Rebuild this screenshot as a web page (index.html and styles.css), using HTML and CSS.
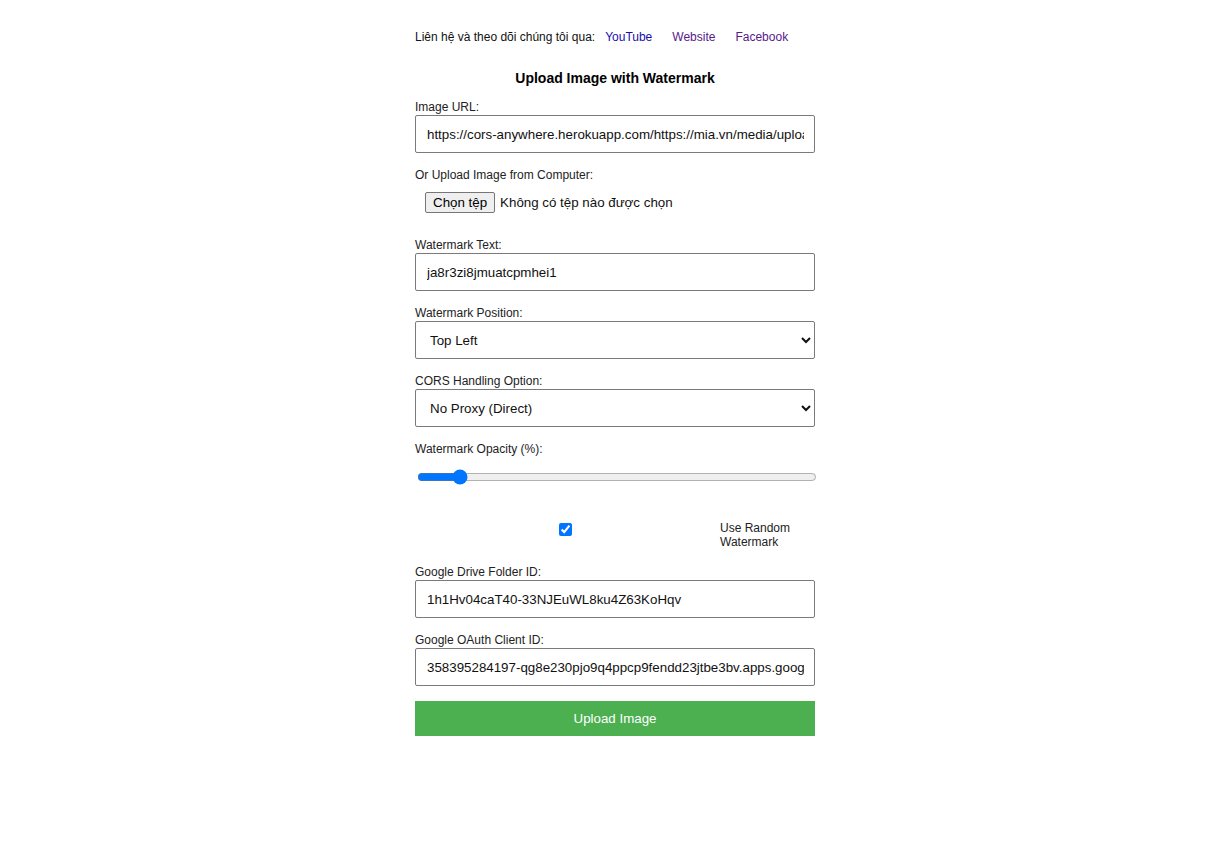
FILE: index.html
```html
<!DOCTYPE html>
<html lang="vi">
<head>
<meta charset="utf-8">
<title>Upload Image with Watermark</title>
<link rel="stylesheet" href="styles.css">
</head>
<body>
<div class="container">
  <div class="contact"><span>Liên hệ và theo dõi chúng tôi qua:</span><a class="link-new" href="#yt">YouTube</a><a class="link-visited" href="#web">Website</a><a class="link-visited" href="#fb">Facebook</a></div>
  <h2 class="title">Upload Image with Watermark</h2>
  <form class="form">
    <label class="field-label" for="url">Image URL:</label>
    <input class="field" id="url" type="text" value="https://cors-anywhere.herokuapp.com/https://mia.vn/media/uploads/blog-du-lich/anh.jpg">
    <label class="field-label" for="file">Or Upload Image from Computer:</label>
    <div class="file-row">
      <span class="file-btn">Chọn tệp</span><span class="file-name">Không có tệp nào được chọn</span>
    </div>
    <label class="field-label" for="wm">Watermark Text:</label>
    <input class="field" id="wm" type="text" value="ja8r3zi8jmuatcpmhei1">
    <label class="field-label" for="pos">Watermark Position:</label>
    <select class="field select" id="pos">
      <option>Top Left</option>
      <option>Top Right</option>
      <option>Bottom Left</option>
      <option>Bottom Right</option>
      <option>Center</option>
    </select>
    <label class="field-label" for="cors">CORS Handling Option:</label>
    <select class="field select" id="cors">
      <option>No Proxy (Direct)</option>
      <option>CORS Anywhere</option>
    </select>
    <label class="field-label" for="op">Watermark Opacity (%):</label>
    <div class="range-row">
      <input class="range" id="op" type="range" min="0" max="100" value="9">
    </div>
    <div class="check-row">
      <div class="check-cell"><input class="check" id="rnd" type="checkbox" checked></div>
      <label class="check-label" for="rnd">Use Random Watermark</label>
    </div>
    <label class="field-label" for="gd">Google Drive Folder ID:</label>
    <input class="field" id="gd" type="text" value="1h1Hv04caT40-33NJEuWL8ku4Z63KoHqv">
    <label class="field-label" for="oa">Google OAuth Client ID:</label>
    <input class="field" id="oa" type="text" value="358395284197-qg8e230pjo9q4ppcp9fendd23jtbe3bv.apps.googleusercontent.com">
    <button class="submit" type="button">Upload Image</button>
  </form>
</div>
</body>
</html>
```
FILE: styles.css
```css
html, body {
  background: #ffffff;
}
body {
  margin: 0 0 0 8px;
  font-family: "Liberation Sans", Arial, sans-serif;
  color: #222;
}
.container {
  width: 400px;
  margin: 0 auto;
  padding-top: 30px;
}
.contact {
  display: flex;
  font-size: 12px;
  line-height: 14px;
  color: #111;
}
.contact a {
  margin: 0 10px;
  text-decoration: none;
}
.link-new {
  color: #1a0dab;
}
.link-visited {
  color: #551a8b;
}
.title {
  margin: 26px 0 0 0;
  font-size: 14px;
  line-height: 16px;
  font-weight: bold;
  text-align: center;
  color: #000;
}
.form {
  display: flex;
  flex-direction: column;
  margin-top: 14px;
}
.field-label {
  display: block;
  font-size: 12px;
  line-height: 14px;
  margin-bottom: 1px;
  color: #222;
}
.field {
  box-sizing: border-box;
  width: 100%;
  height: 38px;
  margin: 0 0 15px 0;
  padding: 10px 10px 10px 11px;
  border: 1px solid #7a7a7a;
  border-radius: 2px;
  font-family: "Liberation Sans", Arial, sans-serif;
  font-size: 13.333px;
  color: #111;
  background: #fff;
  outline: none;
}
.select {
  padding: 0 6px 0 10px;
}
.file-row {
  box-sizing: border-box;
  height: 40px;
  margin-bottom: 15px;
  padding: 9px 10px 0 10px;
  display: flex;
  align-items: flex-start;
  font-size: 13.333px;
}
.file-btn {
  box-sizing: border-box;
  height: 21px;
  padding: 1px 7px;
  line-height: 17px;
  border: 1px solid #767676;
  border-radius: 2px;
  background: #efefef;
  color: #000;
}
.file-name {
  margin-left: 5px;
  line-height: 21px;
  color: #111;
}
.range-row {
  box-sizing: border-box;
  height: 40px;
  margin-bottom: 14px;
  display: flex;
  align-items: center;
}
.range {
  flex-shrink: 0;
  width: 400px;
  margin: 0 0 0 2px;
  padding: 0;
}
.check-row {
  display: flex;
  align-items: flex-start;
  padding-top: 10px;
  margin-bottom: 15px;
  height: 29px;
}
.check-cell {
  width: 300px;
  display: flex;
  justify-content: center;
  padding-top: 2px;
}
.check {
  margin: 0;
  width: 13px;
  height: 13px;
}
.check-label {
  margin-left: 5px;
  width: 95px;
  font-size: 12px;
  line-height: 14px;
  color: #222;
}
.submit {
  width: 100%;
  height: 35px;
  padding: 10px;
  border: none;
  background: #4caf50;
  color: #fff;
  font-family: "Liberation Sans", Arial, sans-serif;
  font-size: 13.333px;
  cursor: pointer;
}
```
